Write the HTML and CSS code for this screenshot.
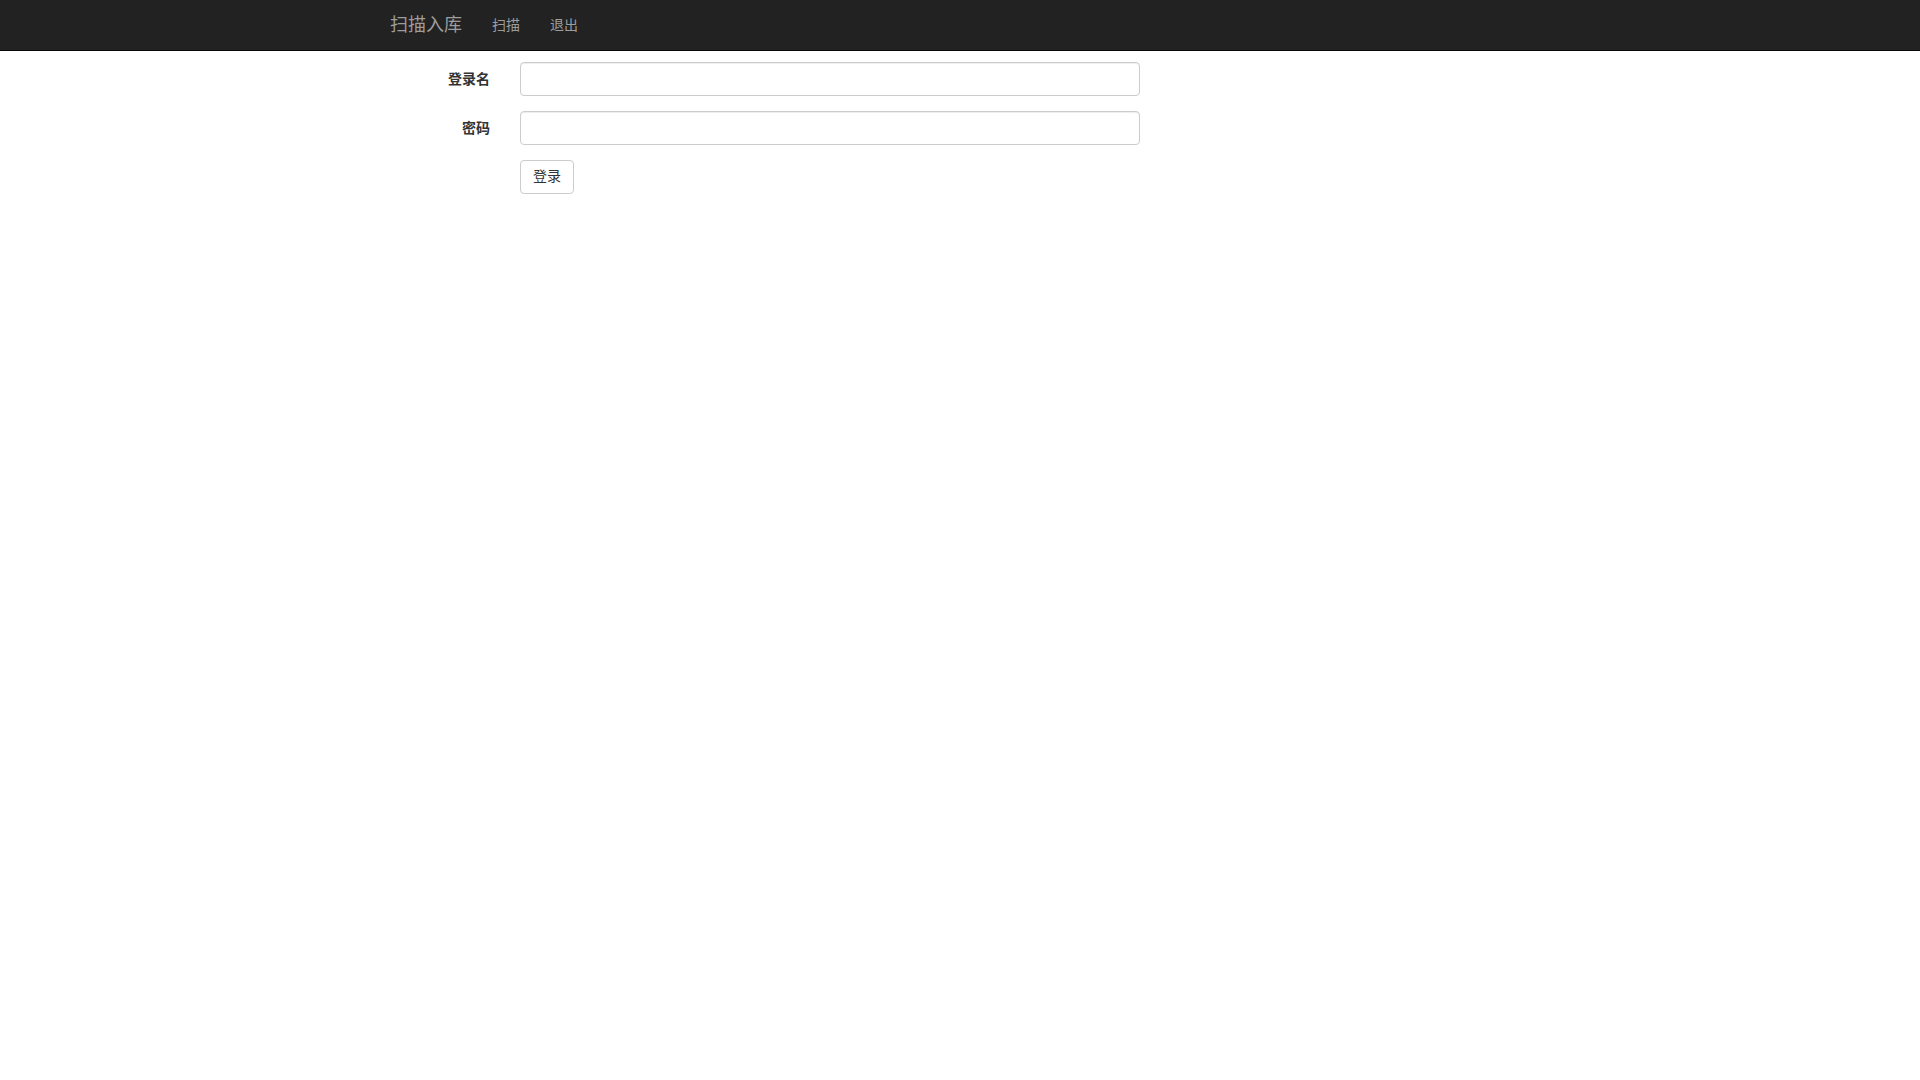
FILE: index.html
```html
<!DOCTYPE html>
<html lang="zh-CN">
<head>
<meta charset="utf-8">
<title>扫描入库</title>
<link rel="stylesheet" href="styles.css">
</head>
<body>
<nav class="navbar">
  <div class="container nav-inner">
    <a class="brand" href="#">扫描入库</a>
    <a class="nav-link" href="#">扫描</a>
    <a class="nav-link" href="#">退出</a>
  </div>
</nav>
<main class="container">
  <form class="login-form">
    <div class="form-group">
      <label class="form-label" for="u">登录名</label>
      <input class="form-input" id="u" type="text">
    </div>
    <div class="form-group">
      <label class="form-label" for="p">密码</label>
      <input class="form-input" id="p" type="password">
    </div>
    <div class="form-group">
      <span class="form-label"></span>
      <button class="btn" type="button">登录</button>
    </div>
  </form>
</main>
</body>
</html>
```
FILE: styles.css
```css
* { box-sizing: border-box; }
html, body {
  margin: 0;
  padding: 0;
  background: #fff;
  font-family: "Liberation Sans", "Noto Sans CJK SC", sans-serif;
  font-size: 14px;
  line-height: 1.42857;
  color: #333;
}
.container {
  width: 1170px;
  margin: 0 auto;
  padding: 0 15px;
}
.navbar {
  background: #222;
  border-bottom: 1px solid #080808;
  height: 51px;
}
.nav-inner {
  display: flex;
  align-items: center;
  height: 50px;
}
.brand {
  font-size: 18px;
  line-height: 20px;
  color: #9d9d9d;
  text-decoration: none;
  padding: 15px 15px 15px 0;
}
.nav-link {
  font-size: 14px;
  line-height: 20px;
  color: #9d9d9d;
  text-decoration: none;
  padding: 15px;
}
.login-form {
  padding-top: 11px;
}
.form-group {
  display: flex;
  align-items: flex-start;
  gap: 30px;
  margin-bottom: 15px;
}
.form-label {
  width: 100px;
  flex: none;
  text-align: right;
  font-weight: bold;
  padding-top: 7px;
  line-height: 20px;
}
.form-input {
  width: 620px;
  height: 34px;
  padding: 6px 12px;
  font-size: 14px;
  border: 1px solid #ccc;
  border-radius: 4px;
  box-shadow: inset 0 1px 1px rgba(0,0,0,0.075);
  background: #fff;
  margin: 0;
}
.btn {
  height: 34px;
  padding: 6px 12px;
  font-size: 14px;
  line-height: 20px;
  font-family: "Liberation Serif", "Noto Sans CJK SC", serif;
  color: #333;
  background: #fff;
  border: 1px solid #ccc;
  border-radius: 4px;
  margin: 0;
}
```
